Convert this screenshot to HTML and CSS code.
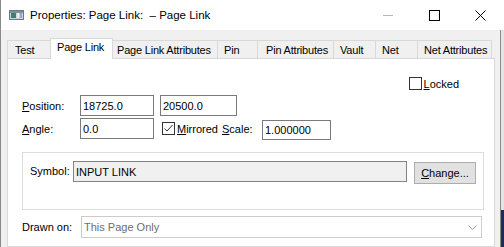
FILE: index.html
```html
<!DOCTYPE html>
<html>
    <head>
        <title>Properties: Page Link</title>
        <link rel="stylesheet" href="styles.css">
    </head>
    <body>
        <div class="window">
            <div class="titlebar">
                <svg class="app-icon" width="15" height="10" viewBox="0 0 15 10">
                    <rect x="0.5" y="0.5" width="14" height="9" fill="#c9d3dc" stroke="#6b7886"/>
                    <rect x="1" y="1" width="13" height="2" fill="#7f8fa0"/>
                    <rect x="2" y="3" width="5" height="5" fill="#3f7d70"/>
                    <rect x="8" y="3" width="2" height="5" fill="#e9eef2"/>
                    <rect x="11" y="3" width="2" height="5" fill="#9aa8b6"/>
                </svg>
                <span class="title">Properties: Page Link:&nbsp; – Page Link</span>
                <div class="caption">
                    <span class="cap-btn"><span class="cap-min"></span></span>
                    <span class="cap-btn"><span class="cap-max"></span></span>
                    <span class="cap-btn">
                        <svg width="11" height="11" viewBox="0 0 11 11"><path d="M0.5 0.5 L10.5 10.5 M10.5 0.5 L0.5 10.5" stroke="#000" stroke-width="1"/></svg>
                    </span>
                </div>
            </div>
            <div class="client">
                <div class="dialog">
                    <div class="tabs">
                        <span class="tab t-test">Test</span>
                        <span class="tab t-link active">Page Link</span>
                        <span class="tab t-link-attr">Page Link Attributes</span>
                        <span class="tab t-pin">Pin</span>
                        <span class="tab t-pin-attr">Pin Attributes</span>
                        <span class="tab t-vault">Vault</span>
                        <span class="tab t-net">Net</span>
                        <span class="tab t-net-attr">Net Attributes</span>
                    </div>
                    <div class="panel">
                        <div class="locked-row">
                            <span class="check"></span>
                            <span class="check-text"><u>L</u>ocked</span>
                        </div>
                        <div class="row row-pos">
                            <span class="label"><u>P</u>osition:</span>
                            <input class="field f-x" type="text" value="18725.0">
                            <input class="field f-y" type="text" value="20500.0">
                        </div>
                        <div class="row row-angle">
                            <span class="label"><u>A</u>ngle:</span>
                            <input class="field f-x" type="text" value="0.0">
                            <span class="check checked">
                                <svg width="11" height="11" viewBox="0 0 11 11"><path d="M1.5 5.5 L4 8 L9.5 2" fill="none" stroke="#333" stroke-width="1"/></svg>
                            </span>
                            <span class="check-text mirrored"><u>M</u>irrored</span>
                            <span class="scale-label"><u>S</u>cale:</span>
                            <input class="field f-scale" type="text" value="1.000000">
                        </div>
                        <div class="group">
                            <span class="sym-label">Symbol:</span>
                            <input class="field f-symbol" type="text" value="INPUT LINK" readonly>
                            <button class="btn"><u>C</u>hange...</button>
                        </div>
                        <div class="row row-drawn">
                            <span class="drawn-label">Drawn on:</span>
                            <div class="combo">
                                <span>This Page Only</span>
                                <svg width="9" height="5" viewBox="0 0 9 5"><path d="M0.5 0.5 L4.5 4.5 L8.5 0.5" fill="none" stroke="#999" stroke-width="1"/></svg>
                            </div>
                        </div>
                    </div>
                </div>
                <div class="desktop"></div>
            </div>
        </div>
    </body>
</html>
```

FILE: styles.css
```css
* {
    box-sizing: border-box;
}
html, body {
    margin: 0;
    width: 504px;
    height: 247px;
    overflow: hidden;
    font-family: "Liberation Sans", Arial, sans-serif;
    font-size: 11px;
    color: #000;
    background: #f0f0f0;
}
u {
    text-decoration: underline;
    text-underline-offset: 1px;
}
.window {
    display: flex;
    flex-direction: column;
    height: 247px;
    border-left: 1px solid #8a8a8a;
}
.titlebar {
    height: 30px;
    flex: none;
    background: #fff;
    display: flex;
    align-items: center;
}
.app-icon {
    margin-left: 8px;
}
.title {
    margin-left: 6px;
    font-size: 11.5px;
    white-space: pre;
}
.caption {
    margin-left: auto;
    margin-right: 1px;
    display: flex;
}
.cap-btn {
    width: 46px;
    height: 30px;
    display: flex;
    align-items: center;
    justify-content: center;
}
.cap-min {
    width: 10px;
    height: 1px;
    background: #b8b8b8;
}
.cap-max {
    width: 11px;
    height: 11px;
    border: 1px solid #000;
}
.client {
    flex: 1;
    display: flex;
}
.dialog {
    width: 500px;
    border-right: 1px solid #8a8a8a;
    padding: 8px 0 0 6px;
    display: flex;
    flex-direction: column;
}
.desktop {
    flex: 1;
    background: linear-gradient(#e4e4e4 180px, #1d2c5c 180px);
}
.tabs {
    display: flex;
    align-items: flex-end;
    height: 20px;
    position: relative;
    z-index: 1;
}
.tab {
    height: 18px;
    margin-left: -1px;
    padding: 1px 0 0 6px;
    border: 1px solid #d9d9d9;
    border-bottom: none;
    background: #f0f0f0;
    line-height: 16px;
    white-space: nowrap;
    letter-spacing: -0.2px;
}
.tab:first-child {
    margin-left: 0;
}
.tab.active {
    height: 21px;
    margin-bottom: -1px;
    padding-top: 0;
    background: #fff;
}
.t-test { width: 44px; padding-left: 7px; }
.t-link { width: 63px; }
.t-link-attr { width: 106px; padding-left: 4px; }
.t-pin { width: 41px; }
.t-pin-attr { width: 77px; padding-left: 8px; }
.t-vault { width: 43px; }
.t-net { width: 43px; }
.t-net-attr { width: 75px; }
.panel {
    flex: 1;
    width: 488px;
    border: 1px solid #d9d9d9;
    background: #fff;
    padding: 18px 0 0 14px;
}
.locked-row {
    display: flex;
    align-items: center;
    justify-content: flex-end;
    height: 13px;
    padding-right: 35px;
}
.check {
    width: 13px;
    height: 13px;
    border: 1px solid #333;
    background: #fff;
    display: inline-flex;
    align-items: center;
    justify-content: center;
    flex: none;
}
.check-text {
    margin-left: 2px;
}
.row {
    display: flex;
    align-items: center;
    height: 21px;
}
.row-pos {
    margin-top: 5px;
}
.row-angle {
    margin-top: 2px;
}
.label {
    width: 58px;
}
.field {
    height: 21px;
    margin: 0;
    padding: 0 2px;
    border: 1px solid #7a7a7a;
    background: #fff;
    font: inherit;
    color: #000;
    outline: none;
}
.f-x { width: 74px; }
.f-y { width: 77px; margin-left: 6px; }
.row-angle .check {
    margin-left: 8px;
}
.mirrored {
    width: 45px;
}
.scale-label {
    width: 40px;
}
.f-scale {
    width: 69px;
    height: 20px;
    margin-top: 3px;
}
.group {
    margin-top: 13px;
    width: 462px;
    height: 58px;
    border: 1px solid #dcdcdc;
    padding: 8px 0 0 7px;
    display: flex;
    align-items: flex-start;
}
.sym-label {
    width: 43px;
    line-height: 21px;
}
.f-symbol {
    width: 334px;
    background: #f0f0f0;
    border-color: #838383;
}
.btn {
    width: 62px;
    height: 22px;
    margin: 1px 0 0 7px;
    padding: 0;
    border: 1px solid #adadad;
    background: #e1e1e1;
    font: inherit;
    color: #000;
}
.row-drawn {
    margin-top: 6px;
    height: 22px;
}
.drawn-label {
    width: 59px;
}
.combo {
    width: 401px;
    height: 22px;
    border: 1px solid #cccccc;
    background: #fff;
    color: #6d6d6d;
    display: flex;
    align-items: center;
    justify-content: space-between;
    padding: 0 4px 0 2px;
}
```
